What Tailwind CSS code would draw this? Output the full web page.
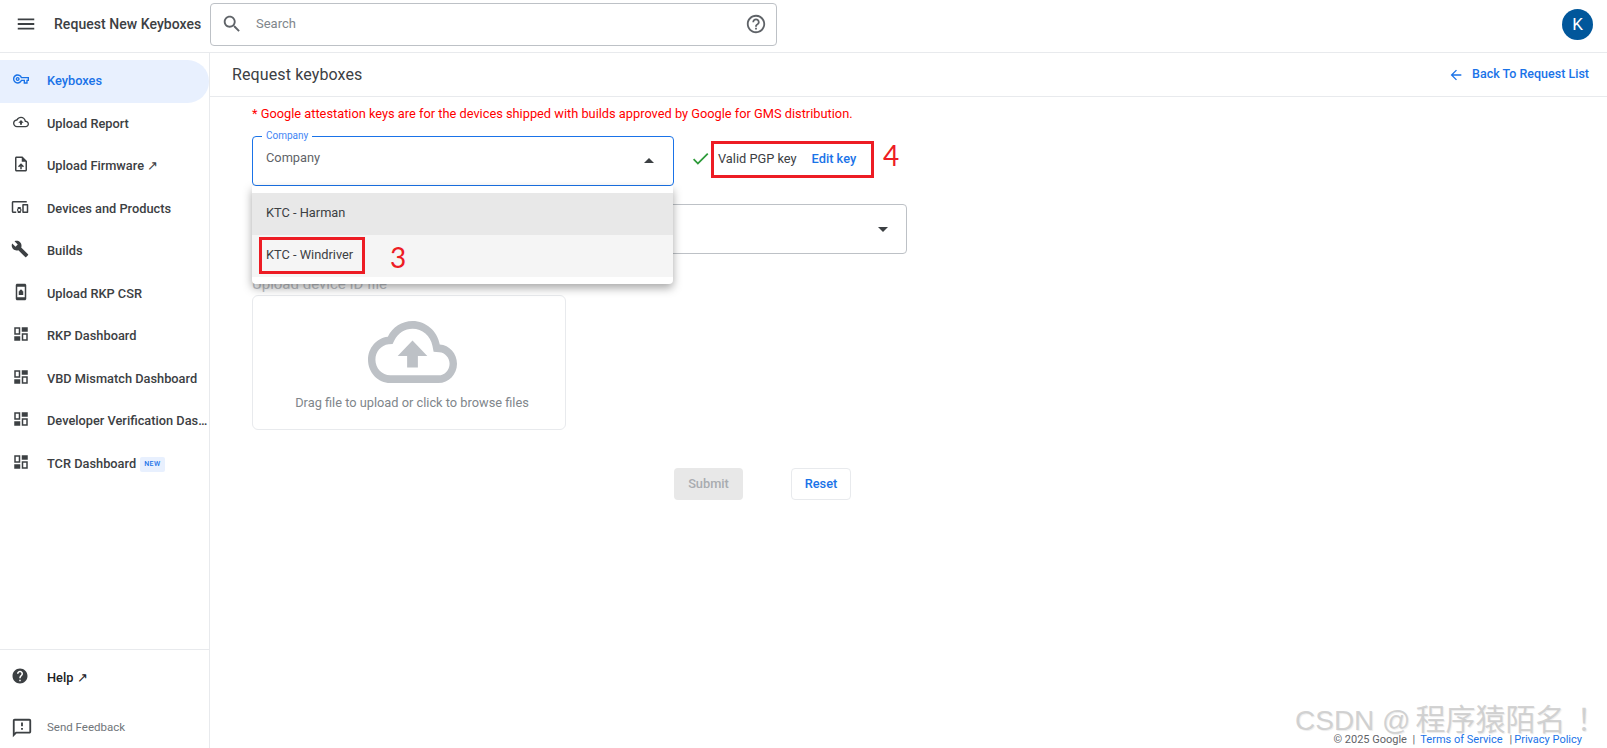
<!DOCTYPE html>
<html lang="en">

<head>
    <meta charset="UTF-8">
    <meta name="viewport" content="width=device-width, initial-scale=1.0">
    <title>Request New Keyboxes</title>
    <script src="https://cdn.jsdelivr.net/npm/@tailwindcss/browser@4"></script>
</head>

<body class="relative flex flex-col h-screen overflow-hidden bg-white font-['Roboto',sans-serif] text-[12.8px] text-[#3c4043]">
    <!-- top bar -->
    <header class="flex items-center h-[53px] shrink-0 border-b border-[#e8eaed]">
        <svg class="w-[22px] h-[22px] ml-[15px] -mt-[4px] fill-[#3c4043]" viewBox="0 0 24 24"><path d="M3 18h18v-2H3v2zm0-5h18v-2H3v2zm0-7v2h18V6H3z"/></svg>
        <div class="ml-[17px] -mt-[4px] w-[156px] text-[14px] tracking-[0.05px] font-medium whitespace-nowrap">Request New Keyboxes</div>
        <div class="flex items-center w-[567px] h-[43px] -mt-[4px] border border-[#bdc1c6] rounded">
            <svg class="w-[22px] h-[22px] ml-[10px] fill-[#5f6368]" viewBox="0 0 24 24"><path d="M15.5 14h-.79l-.28-.27C15.41 12.59 16 11.11 16 9.5 16 5.91 13.09 3 9.5 3S3 5.91 3 9.5 5.91 16 9.5 16c1.61 0 3.09-.59 4.23-1.57l.27.28v.79l5 4.99L20.49 19l-4.99-5zm-6 0C7.01 14 5 11.99 5 9.5S7.01 5 9.5 5 14 7.01 14 9.5 11.99 14 9.5 14z"/></svg>
            <span class="ml-[13px] text-[13px] text-[#80868b]">Search</span>
            <svg class="w-[22px] h-[22px] ml-auto mr-[9px] fill-[#5f6368]" viewBox="0 0 24 24"><path d="M11 18h2v-2h-2v2zm1-16C6.48 2 2 6.48 2 12s4.48 10 10 10 10-4.48 10-10S17.52 2 12 2zm0 18c-4.41 0-8-3.59-8-8s3.59-8 8-8 8 3.59 8 8-3.59 8-8 8zm0-14c-2.21 0-4 1.79-4 4h2c0-1.1.9-2 2-2s2 .9 2 2c0 2-3 1.75-3 5h2c0-2.25 3-2.5 3-5 0-2.21-1.79-4-4-4z"/></svg>
        </div>
        <div class="ml-auto mr-[14px] -mt-[3px] flex items-center justify-center w-[31px] h-[31px] rounded-full bg-[#01579b] text-white text-[17px]">K</div>
    </header>

    <div class="flex flex-1 min-h-0">
        <!-- sidebar -->
        <aside class="flex flex-col w-[210px] shrink-0 border-r border-[#e8eaed] font-medium">
            <nav class="flex flex-col pt-[7px] flex-1">
                <a class="flex items-center h-[42.5px] w-[209px] pl-[13px] pb-[1px] bg-[#e8f0fe] rounded-r-full text-[#1a73e8]">
                    <svg class="w-[16px] h-[16px] -mt-[3px] fill-[#1a73e8]" viewBox="0 0 24 24"><path d="M22 19h-6v-4h-2.68c-1.14 2.42-3.6 4-6.32 4-3.86 0-7-3.14-7-7s3.14-7 7-7c2.72 0 5.17 1.58 6.32 4H24v6h-2v4zm-4-2h2v-4h2v-2H11.94l-.23-.67C11.01 8.34 9.11 7 7 7c-2.76 0-5 2.24-5 5s2.24 5 5 5c2.11 0 4.01-1.34 4.71-3.33l.23-.67H18v4zM7 15c-1.65 0-3-1.35-3-3s1.35-3 3-3 3 1.35 3 3-1.35 3-3 3zm0-4c-.55 0-1 .45-1 1s.45 1 1 1 1-.45 1-1-.45-1-1-1z"/></svg>
                    <span class="ml-[18px]">Keyboxes</span>
                </a>
                <a class="flex items-center h-[42.5px] pl-[13px] pb-[1px]">
                    <svg class="w-[16px] h-[16px] -mt-[3px] fill-[#3c4043]" viewBox="0 0 24 24"><path d="M19.35 10.04C18.67 6.59 15.64 4 12 4 9.11 4 6.6 5.64 5.35 8.04 2.34 8.36 0 10.91 0 14c0 3.31 2.69 6 6 6h13c2.76 0 5-2.24 5-5 0-2.64-2.05-4.78-4.65-4.96zM19 18H6c-2.21 0-4-1.79-4-4 0-2.05 1.53-3.76 3.56-3.97l1.07-.11.5-.95C8.08 7.14 9.94 6 12 6c2.62 0 4.88 1.86 5.39 4.43l.3 1.5 1.53.11c1.56.1 2.78 1.41 2.78 2.96 0 1.65-1.35 3-3 3zM8 13h2.55v3h2.9v-3H16l-4-4z"/></svg>
                    <span class="ml-[18px]">Upload Report</span>
                </a>
                <a class="flex items-center h-[42.5px] pl-3 pb-[1px]">
                    <svg class="w-[18px] h-[18px] -mt-[3px] fill-[#3c4043]" viewBox="0 0 24 24"><path d="M14 2H6c-1.1 0-1.99.9-1.99 2L4 20c0 1.1.89 2 1.99 2H18c1.1 0 2-.9 2-2V8l-6-6zm4 18H6V4h7v5h5v11zM8 15.01l1.41 1.41L11 14.84V19h2v-4.16l1.59 1.59L16 15.01 12.01 11z"/></svg>
                    <span class="ml-[17px]">Upload Firmware ↗</span>
                </a>
                <a class="flex items-center h-[42.5px] pl-[11px] pb-[1px]">
                    <svg class="w-[18px] h-[18px] -mt-[3px] fill-[#3c4043]" viewBox="0 0 24 24"><path d="M3 6h18V4H3c-1.1 0-2 .9-2 2v12c0 1.1.9 2 2 2h4v-2H3V6zm10 6H9v1.78c-.61.55-1 1.33-1 2.22s.39 1.67 1 2.22V20h4v-1.78c.61-.55 1-1.34 1-2.22s-.39-1.67-1-2.22V12zm-2 5.5c-.83 0-1.5-.67-1.5-1.5s.67-1.5 1.5-1.5 1.5.67 1.5 1.5-.67 1.5-1.5 1.5zM22 8h-6c-.5 0-1 .5-1 1v10c0 .5.5 1 1 1h6c.5 0 1-.5 1-1V9c0-.5-.5-1-1-1zm-1 10h-4v-8h4v8z"/></svg>
                    <span class="ml-[18px]">Devices and Products</span>
                </a>
                <a class="flex items-center h-[42.5px] pl-[11px] pb-[1px]">
                    <svg class="w-[18px] h-[18px] -mt-[3px] fill-[#3c4043]" viewBox="0 0 24 24"><path d="M22.7 19l-9.1-9.1c.9-2.3.4-5-1.5-6.9-2-2-5-2.4-7.4-1.3L9 6 6 9 1.6 4.7C.4 7.1.9 10.1 2.9 12.1c1.9 1.9 4.6 2.4 6.9 1.5l9.1 9.1c.4.4 1 .4 1.4 0l2.3-2.3c.5-.4.5-1.1.1-1.4z"/></svg>
                    <span class="ml-[18px]">Builds</span>
                </a>
                <a class="flex items-center h-[42.5px] pl-3 pb-[1px]">
                    <svg class="w-[18px] h-[18px] -mt-[3px] fill-[#3c4043]" viewBox="0 0 24 24"><path fill-rule="evenodd" d="M17 1H7c-1.1 0-2 .9-2 2v18c0 1.1.9 2 2 2h10c1.1 0 2-.9 2-2V3c0-1.1-.9-2-2-2zm0 18H7V5h10v14zM9 11h1v-.5a2 2 0 0 1 4 0v.5h1v5H9z"/></svg>
                    <span class="ml-[17px]">Upload RKP CSR</span>
                </a>
                <a class="flex items-center h-[42.5px] pl-3 pb-[1px]">
                    <svg class="w-[18px] h-[18px] -mt-[3px] fill-[#3c4043]" viewBox="0 0 24 24"><path fill-rule="evenodd" d="M11 3H3v10h8V3zM9 5v6H5V5h4zm4-2h8v6h-8zM3 15h8v6H3zm18-4h-8v10h8V11zm-2 2v6h-4v-6h4z"/></svg>
                    <span class="ml-[17px]">RKP Dashboard</span>
                </a>
                <a class="flex items-center h-[42.5px] pl-3 pb-[1px]">
                    <svg class="w-[18px] h-[18px] -mt-[3px] fill-[#3c4043]" viewBox="0 0 24 24"><path fill-rule="evenodd" d="M11 3H3v10h8V3zM9 5v6H5V5h4zm4-2h8v6h-8zM3 15h8v6H3zm18-4h-8v10h8V11zm-2 2v6h-4v-6h4z"/></svg>
                    <span class="ml-[17px]">VBD Mismatch Dashboard</span>
                </a>
                <a class="flex items-center h-[42.5px] pl-3 pb-[1px]">
                    <svg class="w-[18px] h-[18px] -mt-[3px] shrink-0 fill-[#3c4043]" viewBox="0 0 24 24"><path fill-rule="evenodd" d="M11 3H3v10h8V3zM9 5v6H5V5h4zm4-2h8v6h-8zM3 15h8v6H3zm18-4h-8v10h8V11zm-2 2v6h-4v-6h4z"/></svg>
                    <span class="ml-[17px] truncate">Developer Verification Dashboard</span>
                </a>
                <a class="flex items-center h-[42.5px] pl-3 pb-[1px]">
                    <svg class="w-[18px] h-[18px] -mt-[3px] fill-[#3c4043]" viewBox="0 0 24 24"><path fill-rule="evenodd" d="M11 3H3v10h8V3zM9 5v6H5V5h4zm4-2h8v6h-8zM3 15h8v6H3zm18-4h-8v10h8V11zm-2 2v6h-4v-6h4z"/></svg>
                    <span class="ml-[17px]">TCR Dashboard</span>
                    <span class="ml-[4px] mt-[3px] px-[4px] h-[15px] leading-[15px] rounded-[2px] bg-[#e8f0fe] text-[#1a73e8] text-[7px] tracking-[0.5px]">NEW</span>
                </a>
            </nav>
            <div class="border-t border-[#e8eaed] h-[99px] shrink-0">
                <a class="flex items-center h-[56px] pl-[11px] text-[#202124]">
                    <svg class="w-[18px] h-[18px] -mt-[4px] fill-[#3c4043]" viewBox="0 0 24 24"><path d="M12 2C6.48 2 2 6.48 2 12s4.48 10 10 10 10-4.48 10-10S17.52 2 12 2zm1 17h-2v-2h2v2zm2.07-7.75l-.9.92C13.45 12.9 13 13.5 13 15h-2v-.5c0-1.1.45-2.1 1.17-2.83l1.24-1.26c.37-.36.59-.86.59-1.41 0-1.1-.9-2-2-2s-2 .9-2 2H8c0-2.21 1.79-4 4-4s4 1.79 4 4c0 .88-.36 1.68-.93 2.25z"/></svg>
                    <span class="ml-[18px]">Help ↗</span>
                </a>
                <a class="flex items-center h-[43px] pl-[11px] font-normal text-[11.5px] text-[#70757a]">
                    <svg class="w-[22px] h-[22px] fill-[#3c4043]" viewBox="0 0 24 24"><path d="M20 2H4c-1.1 0-1.99.9-1.99 2L2 22l4-4h14c1.1 0 2-.9 2-2V4c0-1.1-.9-2-2-2zm0 14H5.17L4 17.17V4h16v12zm-9-4h2v2h-2zm0-6h2v4h-2z"/></svg>
                    <span class="ml-[14px]">Send Feedback</span>
                </a>
            </div>
        </aside>

        <!-- content -->
        <main class="flex-1 min-w-0 flex flex-col">
            <div class="flex items-center justify-between h-[44px] shrink-0 pl-[22px] pr-[18px] border-b border-[#e8eaed]">
                <h1 class="text-[16px] tracking-[0.12px]">Request keyboxes</h1>
                <a class="flex items-center font-medium text-[#1a73e8] text-[12.5px]">
                    <svg class="w-[16px] h-[16px] mr-[8px] fill-[#1a73e8]" viewBox="0 0 24 24"><path d="M20 11H7.83l5.59-5.59L12 4l-8 8 8 8 1.41-1.41L7.83 13H20v-2z"/></svg>
                    Back To Request List
                </a>
            </div>

            <form class="relative pl-[42px] flex-1">
                <p class="pt-[9px] h-[39px] text-[#ff0000] leading-[16px]">* Google attestation keys are for the devices shipped with builds approved by Google for GMS distribution.</p>

                <div class="flex items-center">
                    <div class="relative flex items-center w-[422px] h-[50px] border border-[#1a73e8] rounded px-[13px]">
                        <span class="absolute -top-[7px] left-[9px] bg-white px-[4px] text-[10px] leading-[12px] text-[#4285f4]">Company</span>
                        <span class="text-[#5f6368] -mt-[7px]">Company</span>
                        <span class="ml-auto mr-[6px] -mt-[2px] w-0 h-0 border-x-[5px] border-x-transparent border-b-[5px] border-b-[#3c4043]"></span>
                    </div>
                    <svg class="w-[21px] h-[21px] ml-[16px] -mt-[5px] fill-[#2e9b3a]" viewBox="0 0 24 24"><path d="M9 16.17 4.83 12l-1.42 1.41L9 19 21 7l-1.41-1.41z"/></svg>
                    <span class="ml-[7px] -mt-[5px]">Valid PGP key</span>
                    <a class="ml-[15px] -mt-[5px] font-medium text-[#1a73e8]">Edit key</a>
                </div>

                <!-- second select, mostly under the dropdown -->
                <div class="flex items-center justify-end w-[655px] h-[50px] mt-[18px] border border-[#bdc1c6] rounded pr-[18px]">
                    <span class="w-0 h-0 border-x-[5px] border-x-transparent border-t-[5px] border-t-[#3c4043]"></span>
                </div>

                <div class="mt-[22px] h-[17px] leading-[17px] text-[15px] text-[#bdc1c6]">Upload device ID file</div>
                <div class="flex flex-col items-center w-[314px] h-[135px] mt-[2px] pl-[6px] border border-[#e8eaed] rounded-md">
                    <svg class="w-[89px] h-[62px] mt-[25px] fill-[#bdc1c6]" viewBox="0 4 24 16" preserveAspectRatio="none"><path d="M19.35 10.04C18.67 6.59 15.64 4 12 4 9.11 4 6.6 5.64 5.35 8.04 2.34 8.36 0 10.91 0 14c0 3.31 2.69 6 6 6h13c2.76 0 5-2.24 5-5 0-2.64-2.05-4.78-4.65-4.96zM19 18H6c-2.21 0-4-1.79-4-4 0-2.05 1.53-3.76 3.56-3.97l1.07-.11.5-.95C8.08 7.14 9.94 6 12 6c2.62 0 4.88 1.86 5.39 4.43l.3 1.5 1.53.11c1.56.1 2.78 1.41 2.78 2.96 0 1.65-1.35 3-3 3zM8 13h2.55v3h2.9v-3H16l-4-4z"/></svg>
                    <span class="mt-[10px] text-[#80868b]">Drag file to upload or click to browse files</span>
                </div>

                <div class="flex mt-[38px] ml-[422px]">
                    <button type="button" class="w-[69px] h-[32px] rounded bg-[#e8e8e8] font-medium text-[#a9acb0]">Submit</button>
                    <button type="button" class="w-[60px] h-[32px] ml-[48px] rounded border border-[#e8eaed] font-medium text-[#1a73e8]">Reset</button>
                </div>

                <!-- open dropdown -->
                <div class="absolute left-[42px] top-[89px] w-[421px] h-[98px] py-[7px] bg-white rounded-b shadow-[0_4px_10px_rgba(0,0,0,0.35)]">
                    <div class="flex items-center h-[42px] pl-[14px] pb-[2px] bg-[#e8e8e8]">KTC - Harman</div>
                    <div class="flex items-center h-[42px] pl-[14px] pb-[2px] bg-[#f5f5f5]">KTC - Windriver</div>
                </div>

                <!-- red annotations -->
                <div class="absolute left-[49px] top-[140px] w-[106px] h-[37px] border-[3px] border-[#ed1c24]"></div>
                <div class="absolute left-[180px] top-[142px] text-[28px] leading-[36px] text-[#ed1c24] font-['Lato',sans-serif]">3</div>
                <div class="absolute left-[501px] top-[44px] w-[163px] h-[37px] border-[3px] border-[#ed1c24]"></div>
                <div class="absolute left-[673px] top-[40px] text-[28px] leading-[36px] text-[#ed1c24] font-['Lato',sans-serif]">4</div>
            </form>
        </main>
    </div>

    <!-- footer links and watermark over the page -->
    <div class="absolute right-[25px] bottom-[1px] text-[11px] leading-[14px] text-[#5f6368]">
        © 2025 Google &nbsp;|&nbsp; <a class="text-[#1a73e8]">Terms of Service</a><span class="ml-[7px] mr-[2px]">|</span><a class="text-[#1a73e8]">Privacy Policy</a>
    </div>
    <div class="absolute left-[1295px] top-[702px] text-[28px] leading-[36px] text-[#c8c8c8]/80 [text-shadow:1px_1px_1px_rgba(0,0,0,0.08)] whitespace-nowrap font-['Liberation_Sans','Noto_Sans_CJK_SC',sans-serif]">CSDN @<span class="ml-[5px] text-[30px]">程序猿陌名</span><span class="ml-[11px] text-[30px]">！</span></div>
</body>

</html>
